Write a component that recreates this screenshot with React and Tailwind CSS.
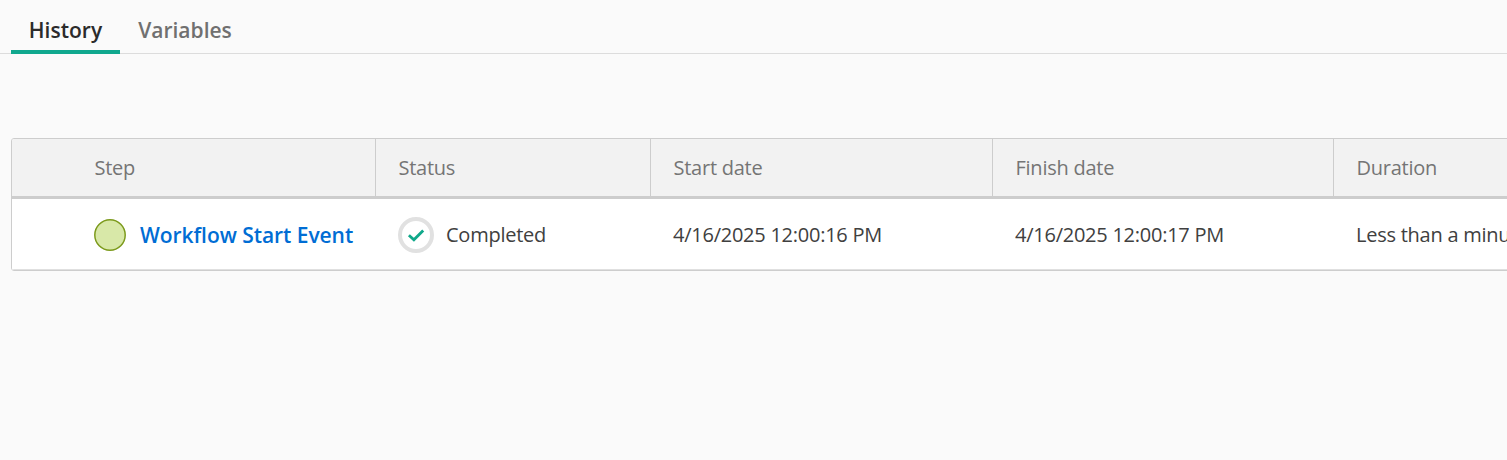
const tabs = ["History", "Variables"];

const columns = [
  { label: "Step", className: "w-[363px] pl-[82.5px]" },
  { label: "Status", className: "w-[275px] border-l pl-[22.5px]" },
  { label: "Start date", className: "w-[342px] border-l pl-[22.5px]" },
  { label: "Finish date", className: "w-[341px] border-l pl-[22.5px]" },
  { label: "Duration", className: "w-[300px] border-l pl-[22.5px]" },
];

const rows = [
  {
    step: "Workflow Start Event",
    status: "Completed",
    start: "4/16/2025 12:00:16 PM",
    finish: "4/16/2025 12:00:17 PM",
    duration: "Less than a minute",
  },
];

const StartEventIcon = () => (
  <svg className="size-8 shrink-0" viewBox="0 0 32 32">
    <circle cx="16" cy="16" r="15.2" fill="#d8e8a8" stroke="#7c9a1c" strokeWidth="1.5" />
  </svg>
);

const CompletedIcon = () => (
  <svg className="size-9 shrink-0" viewBox="0 0 36 36" fill="none">
    <circle cx="18" cy="18" r="16" fill="#fff" stroke="#e1e1e1" strokeWidth="4" />
    <path d="M10.9 18.2 L15.9 22.8 L25.2 13.4" stroke="#10a88a" strokeWidth="2.8" />
  </svg>
);

const Tab = ({ label, active }) => (
  <button
    className={
      active
        ? "h-[54px] w-[109px] border-b-4 border-[#10a88e] pt-[11px] text-[#2b2b2b]"
        : "h-[54px] w-[130px] border-b-4 border-transparent pt-[11px] text-[#707070]"
    }
  >
    {label}
  </button>
);

const Row = ({ row }) => (
  <div className="flex h-[71px] items-center border-b border-[#e0e0e0] bg-white pt-[2px] text-[#404040]">
    <div className="flex w-[364px] shrink-0 items-center gap-[14px] pl-[82px]">
      <StartEventIcon />
      <a className="pt-px text-[21px] font-semibold tracking-[-0.05px] text-[#006dd4]">{row.step}</a>
    </div>
    <div className="flex w-[275px] shrink-0 items-center gap-3 pl-[22px]">
      <CompletedIcon />
      {row.status}
    </div>
    <div className="w-[342px] shrink-0 pl-[22px]">{row.start}</div>
    <div className="w-[341px] shrink-0 pl-[22px]">{row.finish}</div>
    <div className="w-[300px] shrink-0 pl-[22px]">{row.duration}</div>
  </div>
);

const App = () => (
  <div className="h-screen overflow-hidden bg-[#fafafa] font-['Open_Sans',sans-serif] text-[20px] tracking-[-0.25px] whitespace-nowrap">
    <div className="flex h-[54px] pl-[11px] text-[21px] font-semibold tracking-normal shadow-[inset_0_-1px_#dcdcdc]">
      {tabs.map((label, i) => (
        <Tab key={label} label={label} active={i === 0} />
      ))}
    </div>

    <div className="mt-[84px] ml-[11px] w-[1625px] overflow-hidden rounded-[3px] border border-[#cdcdcd]">
      <div className="flex h-[60px] border-b-3 border-[#cdcdcd] bg-[#f2f2f2] text-[#757575]">
        {columns.map((col) => (
          <div key={col.label} className={`flex shrink-0 items-center border-[#cdcdcd] ${col.className}`}>
            {col.label}
          </div>
        ))}
      </div>
      {rows.map((row) => (
        <Row key={row.start} row={row} />
      ))}
    </div>
  </div>
);

export default App;
